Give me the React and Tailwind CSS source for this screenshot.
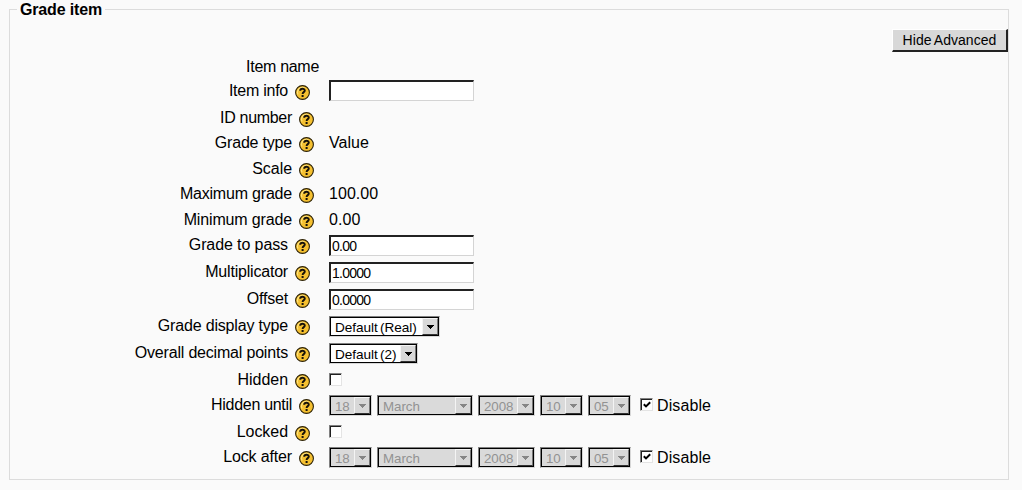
import clsx from "clsx";

const fields = [
  { label: "Item name", row: "h-[24px]", tracking: "tracking-[-0.3px]", noHelp: true },
  { label: "Item info", row: "h-[26px]", tracking: "tracking-[-0.25px]", advanced: true, type: "text", value: "" },
  { label: "ID number", row: "mt-px h-[25px]", tracking: "tracking-[-0.3px]" },
  { label: "Grade type", row: "h-[26px]", tracking: "tracking-[-0.2px]", type: "static", value: "Value" },
  { label: "Scale", row: "h-[25px]", tracking: "tracking-[-0.05px]" },
  { label: "Maximum grade", row: "h-[26px]", tracking: "tracking-[-0.2px]", type: "static", value: "100.00" },
  { label: "Minimum grade", row: "h-[25px]", tracking: "tracking-[-0.15px]", type: "static", value: "0.00" },
  { label: "Grade to pass", row: "h-[27px]", tracking: "tracking-[-0.1px]", advanced: true, type: "text", value: "0.00" },
  { label: "Multiplicator", row: "h-[27px]", tracking: "tracking-[-0.2px]", advanced: true, type: "text", value: "1.0000" },
  { label: "Offset", row: "h-[27px]", tracking: "tracking-[-0.2px]", advanced: true, type: "text", value: "0.0000" },
  { label: "Grade display type", row: "h-[27px]", tracking: "tracking-[-0.18px]", advanced: true, type: "select", value: "Default (Real)", width: "w-[111px]" },
  { label: "Overall decimal points", row: "h-[27px]", tracking: "tracking-[-0.19px]", advanced: true, type: "select", value: "Default (2)", width: "w-[89px]" },
  { label: "Hidden", row: "h-[25px]", tracking: "tracking-[-0.05px]", advanced: true, type: "checkbox" },
  { label: "Hidden until", row: "h-[27px]", tracking: "tracking-[-0.3px]", type: "date" },
  { label: "Locked", row: "h-[25px]", tracking: "tracking-[-0.05px]", advanced: true, type: "checkbox" },
  { label: "Lock after", row: "h-[25px]", tracking: "tracking-[-0.15px]", type: "date" },
];

const dateParts = [
  { value: "18", width: "w-[43px]" },
  { value: "March", width: "w-[96px]" },
  { value: "2008", width: "w-[57px]" },
  { value: "10", width: "w-[43px]" },
  { value: "05", width: "w-[43px]" },
];

function HelpIcon() {
  return (
    <svg viewBox="0 0 15 15" className="mt-[6px] h-[15px] w-[15px] shrink-0">
      <circle cx="7.5" cy="7.5" r="6.9" fill="#f5c030" stroke="#2b2108" strokeWidth="1.1" />
      <path d="M3 9.5A5 5 0 0 1 9.5 2.8" fill="none" stroke="#ffe27a" strokeWidth="1.2" />
      <path d="M5.2 5.7C5.3 3.2 9.8 3.2 9.8 5.6C9.8 7.2 7.6 7.1 7.6 9" fill="none" stroke="#17120a" strokeWidth="1.9" />
      <rect x="6.6" y="10" width="2" height="2" fill="#17120a" />
    </svg>
  );
}

function Select({ value, width, disabled }) {
  return (
    <button
      type="button"
      disabled={disabled}
      className={clsx(
        "flex h-[21px] shrink-0 border border-t-[#808080] border-l-[#808080] border-r-[#d8d8d8] border-b-[#d8d8d8]",
        disabled ? "bg-[#dadada] text-[13.33px] text-[#929292]" : "bg-white text-[13.6px] text-black",
        width
      )}
    >
      <span className="flex h-full w-full border border-black">
        <span className={clsx("min-w-0 flex-1 pl-1 text-left leading-[19px] tracking-[-0.05px] whitespace-nowrap", !disabled && "[word-spacing:-1.5px]")}>{value}</span>
        <span className="flex h-full w-[16px] shrink-0 items-center justify-center border border-t-[#f4f4f4] border-r-[#777] border-b-[#333] border-l-[#f4f4f4] bg-[#d8d8d8]">
          <svg viewBox="0 0 8 4" className="h-1 w-2" shapeRendering="crispEdges">
            <path d="M0 0H8L4 4Z" fill={disabled ? "#858585" : "#000"} />
          </svg>
        </span>
      </span>
    </button>
  );
}

function Checkbox({ checked }) {
  return (
    <span className="flex h-[13px] w-[13px] shrink-0 items-center justify-center border border-t-[#808080] border-r-[#e4e4e4] border-b-[#e4e4e4] border-l-[#808080] bg-white">
      <span className="flex h-full w-full items-center justify-center border-t border-l border-t-[#202020] border-l-[#202020]">
        {checked && (
          <svg viewBox="0 0 8 8" className="h-2 w-2">
            <path d="M0.8 3.2L3 5.4L7.2 1.2" fill="none" stroke="#000" strokeWidth="2" />
          </svg>
        )}
      </span>
    </span>
  );
}

function Control({ type, value, width }) {
  switch (type) {
    case "static":
      return <span className="leading-6 tracking-[0.05px]">{value}</span>;
    case "text":
      return (
        <input
          type="text"
          defaultValue={value}
          className={clsx(
            "h-[21px] w-[145px] border-t-2 border-r border-b border-l-2 border-t-[#222] border-r-[#d4d4d4] border-b-[#d4d4d4] border-l-[#222] bg-white pt-px pl-px font-['Liberation_Sans',Arial,sans-serif] text-[14px] tracking-[-0.75px] text-black outline-none",
            value ? "mt-[2px]" : "mt-px"
          )}
        />
      );
    case "select":
      return <div className="mt-[2px]"><Select value={value} width={width} /></div>;
    case "checkbox":
      return <div className="mt-[5px]"><Checkbox /></div>;
    case "date":
      return (
        <div className="flex items-start gap-[5px]">
          {dateParts.map((part) => (
            <div key={part.value} className="mt-[2px]"><Select {...part} disabled /></div>
          ))}
          <label className="ml-1 flex">
            <span className="mt-[5px] mr-1"><Checkbox checked /></span>
            <span className="pt-px leading-6 tracking-[0.1px]">Disable</span>
          </label>
        </div>
      );
    default:
      return null;
  }
}

function FormRow({ label, row, tracking, advanced, noHelp, ...control }) {
  return (
    <div className={clsx("flex items-start", row)}>
      <div className={clsx("flex w-[309px] shrink-0 justify-end gap-[7px]", !noHelp && (advanced ? "pr-[9px]" : "pr-[5px]"))}>
        <span className={clsx("leading-6 whitespace-nowrap", tracking)}>{label}</span>
        {!noHelp && <HelpIcon />}
      </div>
      <div className="ml-[10px]">
        <Control {...control} />
      </div>
    </div>
  );
}

export default function App() {
  return (
    <div className="h-[490px] w-[1022px] overflow-hidden bg-[#fafafa] pl-[9px] font-['Liberation_Sans',Arial,sans-serif] text-[16px] text-black">
      <fieldset className="h-[480px] w-[1000px] border border-[#dcdcdc]">
        <legend className="ml-[7px] h-[19px] px-[3px] leading-[20px] font-bold tracking-[-0.15px]">Grade item</legend>
        <div className="flex h-[36px] justify-end pt-[10px]">
          <button type="button" className="h-[23px] w-[116px] border-t border-r-2 border-b-2 border-l border-t-white border-r-[#222] border-b-[#222] border-l-white bg-[#d8d8d8] pt-px text-[14px] leading-[19px] tracking-[0.05px] whitespace-nowrap [word-spacing:-1px]">
            Hide Advanced
          </button>
        </div>
        <div>
          {fields.map((field) => <FormRow key={field.label} {...field} />)}
        </div>
      </fieldset>
    </div>
  );
}
